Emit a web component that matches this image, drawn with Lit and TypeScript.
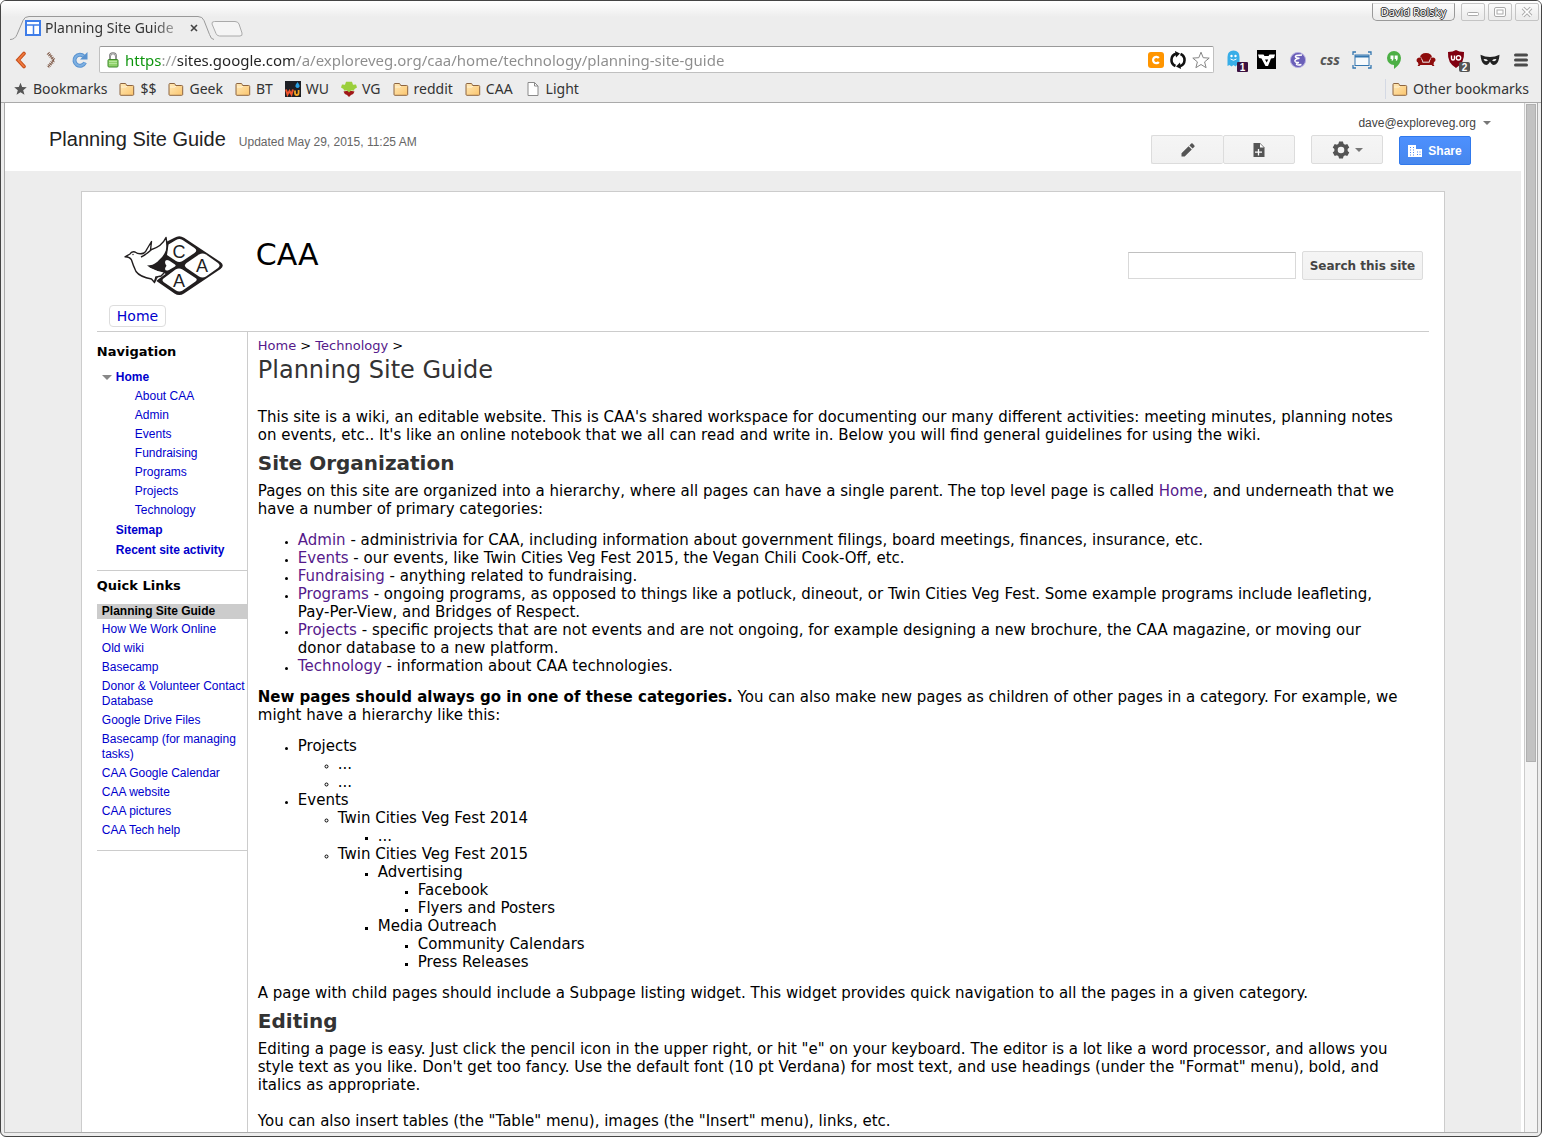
import { LitElement, html, css, svg, nothing, type TemplateResult } from "lit";
import { customElement, property } from "lit/decorators.js";
import { classMap } from "lit/directives/class-map.js";

/* ---------- icons ---------- */

const folder = html`<svg width="16" height="14" viewBox="0 0 16 14">
  <defs><linearGradient id="f" x1="0" y1="0" x2="1" y2="1"><stop offset="0" stop-color="#ffe9b8" /><stop offset="1" stop-color="#fbc56d" /></linearGradient></defs>
  <path d="M1 12.5V2.5q0-1 1-1h4q1 0 1.3 1l.4 1h6q1 0 1 1v8q0 .8-1 .8H2q-1 0-1-.8z" fill="url(#f)" stroke="#8c6440" />
  <path d="M2 5h5l1-1" fill="none" stroke="#fff3d6" />
</svg>`;

const starSolid = html`<svg width="15" height="14" viewBox="0 0 15 14">
  <path d="M7.500.8l1.700 4.300 4.600.2-3.600 2.900 1.300 4.500L7.500 10.200l-4 2.500 1.300-4.500L1.200 5.300l4.600-.2z" fill="#555" />
</svg>`;

const wuIcon = html`<svg width="16" height="16" viewBox="0 0 16 16">
  <rect width="16" height="16" fill="#1d1f24" />
  <path d="M1 8.500l1.500 5L4.500 10l2 3.500L8 8.500" fill="none" stroke="#f0542d" stroke-width="2" />
  <path d="M10 9.500v2.500q0 2 1.800 2t1.800-2V9" fill="none" stroke="#f5a623" stroke-width="1.800" />
  <path d="M12.500 1q2.500 3 2 4.500-.6 1.500-2 1.500t-2-1.500q-.4-1.500 2-4.500z" fill="#2a9fe0" />
</svg>`;

const vgIcon = html`<svg width="16" height="16" viewBox="0 0 16 16">
  <path d="M2.500 10.500q5.500-1.500 11 0-.5 2.500-3.500 3.500l-2 2-2-2q-3-1-3.500-3.500z" fill="#a01818" />
  <path d="M8 11.500L6 9.500 3 9.500 2.500 8 0 6.500 1 3.500l3 .3L5 .8h6l1 3 3-.3 1 3L13.500 8 13 9.500h-3z" fill="#9bcf3c" />
</svg>`;

const pageIcon = html`<svg width="16" height="14" viewBox="0 0 16 14">
  <path d="M3 .5h6.500L13 4v9.500H3z" fill="#fff" stroke="#8a8a8a" />
  <path d="M9.500.5V4H13" fill="none" stroke="#8a8a8a" />
</svg>`;

const siteIcon = html`<svg width="16" height="16" viewBox="0 0 16 16">
  <rect x="1" y="1" width="14" height="14" fill="#fff" stroke="#3f7de8" stroke-width="2" />
  <path d="M2 5h12M8.500 5v9" stroke="#3f7de8" stroke-width="1.500" />
</svg>`;

const backIcon = html`<svg width="12" height="18" viewBox="0 0 12 18">
  <path d="M9 2.500L3 9l6 6.500" fill="none" stroke="#c8501c" stroke-width="3.600" stroke-linecap="round" />
  <path d="M9 2.500L3.200 9 9 15.500" fill="none" stroke="#f07c40" stroke-width="1.600" stroke-linecap="round" />
</svg>`;

const forwardIcon = html`<svg width="12" height="18" viewBox="0 0 12 18">
  <path d="M3 2l6 7-6 7" fill="none" stroke="#8f6a58" stroke-width="3.600" stroke-dasharray="1 1" />
  <path d="M3 2l6 7-6 7" fill="none" stroke="#7b5a4a" stroke-width="1" />
</svg>`;

const reloadIcon = html`<svg width="18" height="18" viewBox="0 0 18 18">
  <path d="M13 5.500A5.500 5.500 0 1 0 14 11.500" fill="none" stroke="#5b93cf" stroke-width="4" />
  <path d="M13 5.500A5.500 5.500 0 1 0 14 11.500" fill="none" stroke="#7db0e2" stroke-width="2" />
  <path d="M16.500 1v7.500H9z" fill="#5b93cf" />
</svg>`;

const lockIcon = html`<svg width="12" height="16" viewBox="0 0 12 16">
  <path d="M3 8V4.500Q3 1.200 6 1.200t3 3.300V8" fill="none" stroke="#777" stroke-width="2" />
  <path d="M3 8V4.500Q3 1.200 6 1.200t3 3.300V8" fill="none" stroke="#ddd" stroke-width=".6" />
  <rect x="1" y="7.500" width="10" height="7.500" rx="1" fill="#8fd16a" stroke="#3f8a2c" />
  <path d="M2 9.500h8M2 11.500h8" stroke="#b5e59a" />
</svg>`;

const cIcon = html`<svg width="16" height="16" viewBox="0 0 16 16">
  <rect width="16" height="16" rx="3" fill="#ff9500" />
  <path d="M10.800 6A3.200 3.200 0 1 0 10.800 10" fill="none" stroke="#fff" stroke-width="2.200" />
</svg>`;

const syncIcon = html`<svg width="18" height="18" viewBox="0 0 18 18">
  <path d="M6.500 15A6.500 6.500 0 0 1 7 2.800M11.500 3A6.500 6.500 0 0 1 11 15.200" fill="none" stroke="#111" stroke-width="2.600" />
  <path d="M6 0l5 2.500L7 6.500zM12 18l-5-2.500 4-4z" fill="#111" />
</svg>`;

const starOutline = html`<svg width="18" height="18" viewBox="0 0 18 18">
  <path d="M9 1.200l2.200 5.500 6 .4-4.600 3.800 1.500 5.800L9 13.500l-5.100 3.200 1.500-5.800L.8 7.100l6-.4z" fill="#fff" stroke="#858585" />
</svg>`;

const ghostIcon = html`<svg width="22" height="25" viewBox="0 -3 22 25">
  <path d="M1.500 16V7Q1.500.5 7.500.5t6 6.500v9l-2-1.500-2 2-2-1.500-2 1.500-2-1.500z" fill="#38aee8" />
  <circle cx="5.500" cy="6" r="1.200" fill="#fff" /><circle cx="9.500" cy="6" r="1.200" fill="#fff" />
  <path d="M4.500 9q3 2.500 6 0" fill="none" stroke="#fff" />
  <rect x="11" y="12" width="11" height="10" rx="1" fill="#3b1140" />
  <text x="16.500" y="20.500" text-anchor="middle" font-family="Liberation Sans" font-weight="700" font-size="10" fill="#fff">1</text>
</svg>`;

const vIcon = html`<svg width="19" height="19" viewBox="0 0 19 19">
  <rect width="19" height="19" fill="#000" />
  <path d="M1 4.500h5.500l1 1.500h4l1-1.500H18l-1 3.500-3 .5L11 16H8.500L4.500 8.500 2 8z" fill="#fff" />
  <path d="M8 9.500l1.700 3 1.500-3z" fill="#000" />
</svg>`;

const emacsIcon = html`<svg width="18" height="18" viewBox="0 0 18 18">
  <circle cx="9" cy="9" r="7.600" fill="#6a5fb8" stroke="#b5aee0" />
  <path d="M13 4q-7.500 0-6.500 2 .8 1.200 4 1.300-5.500 1-4.500 3 1 1.500 4 1.200-3 .8-2.500 2 1.500 1 5 0" fill="none" stroke="#fff" stroke-width="1.400" />
</svg>`;

const shotIcon = html`<svg width="20" height="18" viewBox="0 0 20 18">
  <rect x="3" y="4" width="14" height="10.500" fill="#f7fafc" stroke="#3577b0" />
  <path d="M3 5.500h14" stroke="#3577b0" stroke-width="2" />
  <path d="M1 4V1h3M16 1h3v3M19 14v3h-3M4 17H1v-3" fill="none" stroke="#3577b0" stroke-width="1.300" />
</svg>`;

const hangoutsIcon = html`<svg width="16" height="18" viewBox="0 0 16 18">
  <path d="M8 0a7 7 0 0 1 7 7q0 6-7 11v-4A7 7 0 0 1 8 0z" fill="#4caf45" />
  <path d="M4.500 4.500h3v3q0 2-1.800 2.500V8H4.500zM8.700 4.500h3v3q0 2-1.800 2.500V8H8.700z" fill="#fff" />
</svg>`;

const couchIcon = html`<svg width="20" height="16" viewBox="0 0 20 16">
  <path d="M4 5.500Q4.500 1 10 1t6 4.500L13.500 8v2h-7V8z" fill="#8e0c0c" />
  <path d="M3 5.500q2.500 0 3 3l.5 2h7l.5-2q.5-3 3-3t2.500 2.500q0 1.500-1.500 2l-.5 2.500 1 1.500h-2l-.8-1H4.300l-.8 1h-2l1-1.500L2 10.500Q.5 10 .5 8T3 5.500z" fill="#8e0c0c" />
  <path d="M5.500 7q1 .8 1.200 3h6.600q.2-2.200 1.200-3M4.500 5.500L6 6.500m9.500-1L14 6.500" fill="none" stroke="#ededed" stroke-width=".7" />
</svg>`;

const shieldIcon = html`<svg width="23" height="25" viewBox="0 -3 23 25">
  <path d="M9 0q3 2 8 2 .8 11-8 16Q.2 13 1 2q5 0 8-2z" fill="#800010" />
  <path d="M4.500 5.500v3q0 1.500 1.500 1.500t1.500-1.500v-3" fill="none" stroke="#fff" stroke-width="1.400" />
  <circle cx="11.500" cy="7.800" r="2.200" fill="none" stroke="#fff" stroke-width="1.400" />
  <rect x="12" y="12" width="11" height="10" rx="2" fill="#555" />
  <text x="17.500" y="20.500" text-anchor="middle" font-family="Liberation Sans" font-weight="700" font-size="10" fill="#fff">2</text>
</svg>`;

const maskIcon = html`<svg width="20" height="12" viewBox="0 0 20 12">
  <path d="M.5.8Q5 3 10 3t9.500-2.200Q19 9 15.500 10.500T10 7.500Q8 12 4.500 10.500T.5.800z" fill="#222" />
  <path d="M3.500 5.200q2.500-.6 4.500 1.300-3 1.800-4.500-1.300zM16.500 5.200q-2.500-.6-4.500 1.300 3 1.800 4.500-1.300z" fill="#ededed" />
</svg>`;

const menuIcon = html`<svg width="14" height="14" viewBox="0 0 14 14">
  <path d="M1.500 2h11M1.500 7h11M1.500 12h11" stroke="#4a4a4a" stroke-width="3" stroke-linecap="round" />
</svg>`;

const pencilIcon = html`<svg width="14" height="14" viewBox="0 0 14 14">
  <path d="M.5 13.500v-3.200L7.600 3.200l3.200 3.200-7.100 7.100zM8.400 2.400L10.200.6q.7-.6 1.400 0l1.800 1.800q.6.700 0 1.400l-1.800 1.800z" fill="#555" />
</svg>`;

const newPageIcon = html`<svg width="12" height="14" viewBox="0 0 12 14">
  <path d="M.5 0H7l4.500 4.500V14H.5z" fill="#555" />
  <path d="M7 .8V4.500h3.800z" fill="#fff" />
  <path d="M5.500 6v6.500M2 9.200h7" stroke="#fff" stroke-width="1.300" />
</svg>`;

const gearIcon = html`<svg width="18" height="18" viewBox="0 0 18 18">
  <circle cx="9" cy="9" r="5" fill="none" stroke="#555" stroke-width="3.400" />
  ${[0, 60, 120].map(
    (a) => svg`<path d="M7 .6h4l.6 3h-5.200zM7 17.400h4l.6-3h-5.200z" fill="#555" transform="rotate(${a} 9 9)" />`
  )}
</svg>`;

const buildingIcon = html`<svg width="14" height="12" viewBox="0 0 14 12">
  <path d="M0 0h8v4h6v8H0z" fill="#fff" />
  <path d="M2 2.500h1M5 2.500h1M2 5h1M5 5h1M2 7.500h1M5 7.500h1M2 10h1M5 10h1M9 7h1M11.500 7h1M9 9.500h1M11.500 9.500h1" stroke="#4a8af4" stroke-width="1.200" />
</svg>`;

const caret = html`<svg width="8" height="4" viewBox="0 0 8 4"><path d="M0 0h8L4 4z" fill="#777" /></svg>`;

const caaLogo = html`<svg width="100" height="60" viewBox="0 0 100 60" role="img" aria-label="CAA logo">
  <path d="M50.500 1.800Q55.300-1.200 60 1.800L96.500 26Q101 29.500 96.500 33L60 57.500Q55.300 60.500 50.500 57.500L31 44 37 36 26 30 42 6z" fill="#221e1f" />
  <path d="M52 4Q55.300 2 58.600 4L70.500 12Q74 14.500 70.500 17L58.600 25Q55.300 27 52 25L43 19 44.500 8.500z" fill="#fff" />
  <path d="M75 18.500q3.500-2 7 0L94 27q3 2.400 0 5L82 40.500q-3.500 2-7 0L62.500 32q-3.200-2.600 0-5z" fill="#fff" />
  <path d="M51.500 33.500q3.500-2 7 0L71.500 42q2.500 1.500 0 3.500L58.600 54.500q-3.300 2-6.600 0L39.500 46q-2-1.800 0-3.500z" fill="#fff" />
  <path d="M1 20.800L6 18q1.500-3 5-2 4 3 9 1 2-1.500 3-4l4.500-7.500-1 8.500Q38 10.500 42 1.500q1.600 8 .5 13-2 6-7 10-2 2.500-1.500 4.500-4 2.500-8 1.500 5 2.500 8 4l4 1.500-3.500 2-2.500 3-1.500 5.500-3-3.500Q16 41 12 35.500 9 29 7.500 24 6 21 1 20.800z" fill="#fff" stroke="#221e1f" stroke-width="1.400" stroke-linejoin="round" />
  <path d="M30 34.500l9 .5 2.500 3-5.500 4-4.500 3.500L34 41l-6-1z" fill="#fff" />
  <path d="M31 45.500l1-4.500 5-1 4-4-8-2" fill="none" stroke="#221e1f" stroke-width="1.400" />
  <path d="M23 29.500q6 0 10-3.500l6-4 4 3 6 5-6 5-4 1q-4-2-7-2.500-5-.5-9-4z" fill="#221e1f" />
  <path d="M41 26q.5-3 4-1.500L51 28.500q1.500 1 0 2L45 34q-3.500 1.500-4-1 0-1.500 1.500-3.200Q41 28 41 26z" fill="#fff" />
  <path d="M17 21q6-3 10-7" fill="none" stroke="#221e1f" stroke-width="1.400" />
  <circle cx="9" cy="18.500" r=".7" fill="#221e1f" />
  <g font-family="Liberation Sans" font-size="18" text-anchor="middle" fill="#221e1f">
    <text x="55" y="21.500">C</text>
    <text x="78" y="35.500">A</text>
    <text x="55" y="50.500">A</text>
  </g>
</svg>`;

const tabShape = html`<svg class="shape" width="204" height="24" viewBox="0 0 204 24">
  <path d="M0 23.500Q5 23.500 7 18.500L13 4.500Q14.500.5 19 .5H188Q192.500.5 194 4.500L199.500 18.500Q201 23.500 204 23.500" fill="#ededed" stroke="#999" />
</svg>`;

const newTabShape = html`<svg width="32" height="16" viewBox="0 0 32 16">
  <path d="M3.500.5H24q3 0 4 2.500l3 9q.8 3-2 3H8.500Q6 15 5 12.500L1 3Q.5.5 3.500.5z" fill="#f5f5f5" stroke="#aaa" />
</svg>`;

/* ---------- data ---------- */

interface Bookmark {
  label: string;
  icon: TemplateResult;
}

const BOOKMARKS: Bookmark[] = [
  { label: "Bookmarks", icon: starSolid },
  { label: "$$", icon: folder },
  { label: "Geek", icon: folder },
  { label: "BT", icon: folder },
  { label: "WU", icon: wuIcon },
  { label: "VG", icon: vgIcon },
  { label: "reddit", icon: folder },
  { label: "CAA", icon: folder },
  { label: "Light", icon: pageIcon },
];

const EXTENSIONS: { name: string; icon: TemplateResult }[] = [
  { name: "Ghostery", icon: ghostIcon },
  { name: "Vimium", icon: vIcon },
  { name: "Edit with Emacs", icon: emacsIcon },
  { name: "CSS viewer", icon: html`<span class="css-word">css</span>` },
  { name: "Window resizer", icon: shotIcon },
  { name: "Hangouts", icon: hangoutsIcon },
  { name: "Couch", icon: couchIcon },
  { name: "uBlock", icon: shieldIcon },
  { name: "Mask", icon: maskIcon },
  { name: "Menu", icon: menuIcon },
];

const NAV_CHILDREN = ["About CAA", "Admin", "Events", "Fundraising", "Programs", "Projects", "Technology"];

const QUICK_LINKS = [
  "Planning Site Guide",
  "How We Work Online",
  "Old wiki",
  "Basecamp",
  "Donor & Volunteer Contact Database",
  "Google Drive Files",
  "Basecamp (for managing tasks)",
  "CAA Google Calendar",
  "CAA website",
  "CAA pictures",
  "CAA Tech help",
];

const CATEGORIES: [string, string][] = [
  ["Admin", "administrivia for CAA, including information about government filings, board meetings, finances, insurance, etc."],
  ["Events", "our events, like Twin Cities Veg Fest 2015, the Vegan Chili Cook-Off, etc."],
  ["Fundraising", "anything related to fundraising."],
  ["Programs", "ongoing programs, as opposed to things like a potluck, dineout, or Twin Cities Veg Fest. Some example programs include leafleting, Pay-Per-View, and Bridges of Respect."],
  ["Projects", "specific projects that are not events and are not ongoing, for example designing a new brochure, the CAA magazine, or moving our donor database to a new platform."],
  ["Technology", "information about CAA technologies."],
];

interface TreeNode {
  label: string;
  children?: TreeNode[];
}

const TREE: TreeNode[] = [
  { label: "Projects", children: [{ label: "..." }, { label: "..." }] },
  {
    label: "Events",
    children: [
      { label: "Twin Cities Veg Fest 2014", children: [{ label: "..." }] },
      {
        label: "Twin Cities Veg Fest 2015",
        children: [
          { label: "Advertising", children: [{ label: "Facebook" }, { label: "Flyers and Posters" }] },
          { label: "Media Outreach", children: [{ label: "Community Calendars" }, { label: "Press Releases" }] },
        ],
      },
    ],
  },
];

/* ---------- browser chrome ---------- */

@customElement("browser-chrome")
class BrowserChrome extends LitElement {
  @property() tabTitle = "";
  @property() url = "";

  static styles = css`
    :host { display: block; font: 14px/20px "Noto Sans", "Open Sans", sans-serif; color: #333; }
    svg { display: block; flex: none; }
    button { border: 0; padding: 0; background: none; font: inherit; color: inherit; display: flex; align-items: center; justify-content: center; }
    a { color: inherit; text-decoration: none; }
    .titlebar { display: flex; height: 39px; padding: 0 2px 0 9px; background: linear-gradient(#fff, #ededed 16px); }
    .tabs { flex: 1; display: flex; align-items: flex-end; }
    .tab { display: grid; align-items: center; }
    .tab > * { grid-area: 1 / 1; }
    .tab-body { display: flex; align-items: center; gap: 4px; padding: 0 16px 0 15px; }
    .tab-title { flex: 1; text-align: left; white-space: nowrap; overflow: hidden; -webkit-mask-image: linear-gradient(90deg, #000 108px, transparent 144px); }
    .new-tab { align-self: flex-end; padding: 0 0 3px; margin-left: -3px; }
    .controls { display: flex; gap: 3px; align-items: flex-start; padding-top: 2px; }
    .user { height: 18px; padding: 0 8px; margin-right: 3px; border: 1px solid #999; border-top-color: #ddd; border-radius: 0 0 5px 5px; font-size: 11px; line-height: 16px; color: #fff; text-shadow: 1px 0 #333, -1px 0 #333, 0 1px #333, 0 -1px #333; }
    .control { width: 24px; height: 18px; border: 1px solid #c4c4c4; border-radius: 2px; }
    .toolbar { display: flex; align-items: center; gap: 10px; height: 35px; box-sizing: border-box; padding: 4px 5px 0 14px; }
    .nav { display: flex; align-items: center; gap: 18px; }
    .nav .reload { margin-left: -4px; }
    .omnibox { flex: 1; display: flex; align-items: center; gap: 6px; height: 27px; box-sizing: border-box; padding: 0 3px 0 7px; background: #fff; border: 1px solid #c0c0c0; border-top-color: #999; border-radius: 2px; }
    .url { flex: 1; min-width: 0; border: 0; padding: 0; outline: 0; font: 15px/24px "Noto Sans", "Open Sans", sans-serif; color: transparent; -webkit-text-fill-color: transparent; background: linear-gradient(90deg, #0a930a 37px, #999 37px, #999 51px, #222 51px, #222 169px, #8c8c8c 169px); -webkit-background-clip: text; background-clip: text; }
    .omnibox-icons { display: flex; align-items: center; gap: 5px; }
    .extensions { display: flex; align-items: center; }
    .ext { width: 32px; height: 24px; }
    .ext:first-child { width: 26px; }
    .ext:last-child { width: 30px; }
    .css-word { font: italic 700 14px/20px "Open Sans", "Noto Sans", sans-serif; color: #555; }
    .bookmarks { display: flex; align-items: center; gap: 12px; height: 27px; padding: 0 12px; border-bottom: 1px solid #aaa; }
    .bookmarks a { display: flex; align-items: center; gap: 5px; white-space: nowrap; }
    .bookmarks .other { margin-left: auto; padding-left: 6px; border-left: 1px solid #d4d9e4; }
  `;

  render() {
    return html`
      <header class="titlebar">
        <div class="tabs">
          <div class="tab">
            ${tabShape}
            <div class="tab-body">
              ${siteIcon}
              <span class="tab-title">${this.tabTitle}</span>
              <button aria-label="Close tab">
                <svg width="8" height="8" viewBox="0 0 8 8"><path d="M1 1l6 6M7 1L1 7" stroke="#444" stroke-width="1.600" /></svg>
              </button>
            </div>
          </div>
          <button class="new-tab" aria-label="New tab">${newTabShape}</button>
        </div>
        <div class="controls">
          <button class="user">David Rolsky</button>
          <button class="control" aria-label="Minimize"><svg width="12" height="12" viewBox="0 0 12 12"><rect x=".5" y="6.500" width="11" height="3" rx="1" fill="#fff" stroke="#aaa" /></svg></button>
          <button class="control" aria-label="Maximize"><svg width="12" height="12" viewBox="0 0 12 12"><rect x=".5" y="1.500" width="11" height="9" rx="1.500" fill="#fff" stroke="#aaa" /><rect x="3" y="4" width="6" height="4" fill="#fff" stroke="#aaa" /></svg></button>
          <button class="control" aria-label="Close"><svg width="12" height="12" viewBox="0 0 12 12"><path d="M2 2l8 8M10 2l-8 8" stroke="#aaa" stroke-width="3.600" /><path d="M2 2l8 8M10 2l-8 8" stroke="#fff" stroke-width="1.600" /></svg></button>
        </div>
      </header>
      <div class="toolbar">
        <div class="nav">
          <button aria-label="Back">${backIcon}</button>
          <button aria-label="Forward">${forwardIcon}</button>
          <button class="reload" aria-label="Reload">${reloadIcon}</button>
        </div>
        <div class="omnibox">
          ${lockIcon}
          <input class="url" aria-label="Address" .value=${this.url} />
          <div class="omnibox-icons">${cIcon}${syncIcon}${starOutline}</div>
        </div>
        <div class="extensions">
          ${EXTENSIONS.map((e) => html`<button class="ext" aria-label=${e.name}>${e.icon}</button>`)}
        </div>
      </div>
      <nav class="bookmarks" aria-label="Bookmarks bar">
        ${BOOKMARKS.map((b) => html`<a href="#">${b.icon}${b.label}</a>`)}
        <a class="other" href="#">${folder}Other bookmarks</a>
      </nav>
    `;
  }
}

/* ---------- sites header ---------- */

@customElement("sites-header")
class SitesHeader extends LitElement {
  static styles = css`
    :host { display: flex; justify-content: space-between; height: 68px; background: #fff; font: 12px/16px "Liberation Sans", Arial, sans-serif; color: #444; }
    svg { display: block; flex: none; }
    button { font: inherit; display: flex; align-items: center; justify-content: center; box-sizing: border-box; height: 29px; padding: 0; }
    .title { display: flex; align-items: baseline; gap: 13px; padding: 24px 0 0 44px; }
    h1 { margin: 0; font-size: 20px; line-height: 24px; font-weight: 400; color: #222; }
    .updated { color: #666; }
    .right { display: flex; flex-direction: column; align-items: flex-end; padding: 12px 30px 0 0; }
    .account { height: 16px; gap: 7px; border: 0; background: none; color: #444; }
    .actions { display: flex; gap: 16px; padding: 4px 20px 0 0; }
    .group { display: flex; }
    .tool { width: 72px; gap: 5px; border: 1px solid #dcdcdc; border-radius: 2px; background: linear-gradient(#f5f5f5, #f1f1f1); }
    .group .tool:first-child { border-right: 0; }
    .share { width: 72px; gap: 6px; margin-top: 1px; border: 1px solid #3079ed; border-radius: 2px; background: linear-gradient(#4d90fe, #4787ed); color: #fff; font-weight: 700; }
  `;

  render() {
    return html`
      <div class="title">
        <h1>Planning Site Guide</h1>
        <span class="updated">Updated May 29, 2015, 11:25 AM</span>
      </div>
      <div class="right">
        <button class="account">dave@exploreveg.org ${caret}</button>
        <div class="actions">
          <div class="group">
            <button class="tool" aria-label="Edit page">${pencilIcon}</button>
            <button class="tool" aria-label="New page">${newPageIcon}</button>
          </div>
          <button class="tool" aria-label="More actions">${gearIcon}${caret}</button>
          <button class="share">${buildingIcon}Share</button>
        </div>
      </div>
    `;
  }
}

/* ---------- wiki page ---------- */

@customElement("wiki-sidebar")
class WikiSidebar extends LitElement {
  static styles = css`
    :host { display: block; font: 12px/15px "Liberation Sans", Arial, sans-serif; }
    h2 { margin: 0; font: 700 13px/18px "DejaVu Sans", Verdana, sans-serif; color: #000; }
    ul { list-style: none; margin: 0; padding: 0; display: flex; flex-direction: column; gap: 4px; }
    a { color: #00c; text-decoration: none; }
    section { border-bottom: 1px solid #ccc; padding: 11px 0 12px; }
    section + section { padding-top: 6px; }
    .tree { padding: 9px 0 0 5px; gap: 5px; }
    .top { font-weight: 700; padding-left: 14px; }
    .open { display: flex; align-items: center; gap: 4px; padding-left: 0; }
    .children { padding-left: 33px; margin: -1px 0 0; }
    .links { padding-top: 9px; }
    .links li { padding-left: 5px; }
    .links .current { background: #ccc; font-weight: 700; margin-bottom: -1px; }
    .current a { color: #000; }
  `;

  render() {
    return html`
      <section>
        <h2>Navigation</h2>
        <ul class="tree">
          <li class="top open">
            <svg width="10" height="5" viewBox="0 0 10 5"><path d="M0 0h10L5 5z" fill="#888" /></svg>
            <a href="#">Home</a>
          </li>
          <li>
            <ul class="children">
              ${NAV_CHILDREN.map((c) => html`<li><a href="#">${c}</a></li>`)}
            </ul>
          </li>
          <li class="top"><a href="#">Sitemap</a></li>
          <li class="top"><a href="#">Recent site activity</a></li>
        </ul>
      </section>
      <section>
        <h2>Quick Links</h2>
        <ul class="links">
          ${QUICK_LINKS.map((l, i) => html`<li class=${classMap({ current: i === 0 })}><a href="#">${l}</a></li>`)}
        </ul>
      </section>
    `;
  }
}

@customElement("wiki-article")
class WikiArticle extends LitElement {
  static styles = css`
    :host { display: block; font: 15px/18px "DejaVu Sans", Verdana, sans-serif; color: #000; }
    a { color: #551a8b; text-decoration: none; }
    .crumbs { font-size: 13px; }
    h1 { margin: 0 0 23px; font-size: 24px; line-height: 30px; font-weight: 400; color: #333; }
    h2 { margin: 7px 0; font-size: 20px; line-height: 24px; color: #333; }
    p { margin: 0; }
    p + p { margin-top: 18px; }
    ul { margin: 13px 0; padding-left: 40px; }
    ul ul { margin: 0; }
    li::marker { font-size: 11px; }
  `;

  private tree(nodes: TreeNode[]): TemplateResult {
    return html`<ul>
      ${nodes.map((n) => html`<li>${n.label}${n.children ? this.tree(n.children) : nothing}</li>`)}
    </ul>`;
  }

  render() {
    return html`
      <nav class="crumbs" aria-label="Breadcrumb"><a href="#">Home</a> &gt; <a href="#">Technology</a> &gt;</nav>
      <h1>Planning Site Guide</h1>
      <p>This site is a wiki, an editable website. This is CAA's shared workspace for documenting our many different activities: meeting minutes, planning notes on events, etc.. It's like an online notebook that we all can read and write in. Below you will find general guidelines for using the wiki.</p>
      <h2>Site Organization</h2>
      <p>Pages on this site are organized into a hierarchy, where all pages can have a single parent. The top level page is called <a href="#">Home</a>, and underneath that we have a number of primary categories:</p>
      <ul>
        ${CATEGORIES.map(([name, text]) => html`<li><a href="#">${name}</a> - ${text}</li>`)}
      </ul>
      <p><b>New pages should always go in one of these categories.</b> You can also make new pages as children of other pages in a category. For example, we might have a hierarchy like this:</p>
      ${this.tree(TREE)}
      <p>A page with child pages should include a Subpage listing widget. This widget provides quick navigation to all the pages in a given category.</p>
      <h2>Editing</h2>
      <p>Editing a page is easy. Just click the pencil icon in the upper right, or hit "e" on your keyboard. The editor is a lot like a word processor, and allows you style text as you like. Don't get too fancy. Use the default font (10 pt Verdana) for most text, and use headings (under the "Format" menu), bold, and italics as appropriate.</p>
      <p>You can also insert tables (the "Table" menu), images (the "Insert" menu), links, etc.</p>
    `;
  }
}

@customElement("wiki-page")
class WikiPage extends LitElement {
  static styles = css`
    :host { display: flex; flex-direction: column; box-sizing: border-box; padding: 0 15px; background: #fff; border: 1px solid #ccc; font-family: "DejaVu Sans", Verdana, sans-serif; }
    .masthead { display: flex; align-items: flex-start; padding: 44px 6px 0 27px; height: 69px; }
    svg { display: block; }
    .site { flex: 1; margin: 0 0 0 32px; font-size: 30px; line-height: 38px; font-weight: 400; color: #000; }
    form { display: flex; align-items: center; gap: 6px; padding-top: 15px; }
    input { width: 168px; height: 27px; box-sizing: border-box; border: 1px solid #d9d9d9; border-top-color: #c0c0c0; }
    form button { height: 29px; padding: 0 7px; border: 1px solid #dcdcdc; border-radius: 2px; background: linear-gradient(#f5f5f5, #f1f1f1); font: 700 12px/16px "DejaVu Sans", Verdana, sans-serif; color: #444; }
    .menu { display: flex; padding: 0 12px 4px; border-bottom: 1px solid #ccc; }
    .menu a { padding: 1px 7px; border: 1px solid #ddd; border-radius: 4px; font-size: 14px; line-height: 18px; color: #00c; text-decoration: none; }
    .columns { flex: 1; display: grid; grid-template-columns: 150px 1fr; }
    wiki-article { border-left: 1px solid #ccc; padding: 5px 28px 0 10px; }
  `;

  render() {
    return html`
      <header class="masthead">
        ${caaLogo}
        <h1 class="site">CAA</h1>
        <form role="search">
          <input type="text" aria-label="Search this site" />
          <button type="button">Search this site</button>
        </form>
      </header>
      <nav class="menu"><a href="#">Home</a></nav>
      <div class="columns">
        <wiki-sidebar></wiki-sidebar>
        <wiki-article></wiki-article>
      </div>
    `;
  }
}

/* ---------- root ---------- */

@customElement("app-root")
class AppRoot extends LitElement {
  static styles = css`
    :host { display: block; height: 100vh; overflow: hidden; background: #fff; }
    .window { height: 100%; box-sizing: border-box; display: flex; flex-direction: column; border: 1px solid #444; border-radius: 6px; background: #ededed; overflow: hidden; }
    browser-chrome { flex: none; }
    .view { flex: 1; min-height: 0; display: flex; margin: 0 3px 3px; border: 1px solid #aaa; border-top: 0; background: #fff; }
    .doc { flex: 1; overflow: hidden; background: #ededed; }
    wiki-page { width: 90%; min-height: 100%; margin: 20px auto 0; }
    .scrollbar { flex: none; width: 13px; margin-left: 3px; padding: 1px 1px 0; box-sizing: border-box; border-left: 1px solid #ccc; background: #f4f4f4; }
    .thumb { height: 64%; box-sizing: border-box; background: #c2c2c2; border: 1px solid #b0b0b0; }
  `;

  render() {
    return html`
      <div class="window">
        <browser-chrome
          tabTitle="Planning Site Guide"
          url="https://sites.google.com/a/exploreveg.org/caa/home/technology/planning-site-guide"
        ></browser-chrome>
        <div class="view">
          <main class="doc">
            <sites-header></sites-header>
            <wiki-page></wiki-page>
          </main>
          <div class="scrollbar"><div class="thumb"></div></div>
        </div>
      </div>
    `;
  }
}
